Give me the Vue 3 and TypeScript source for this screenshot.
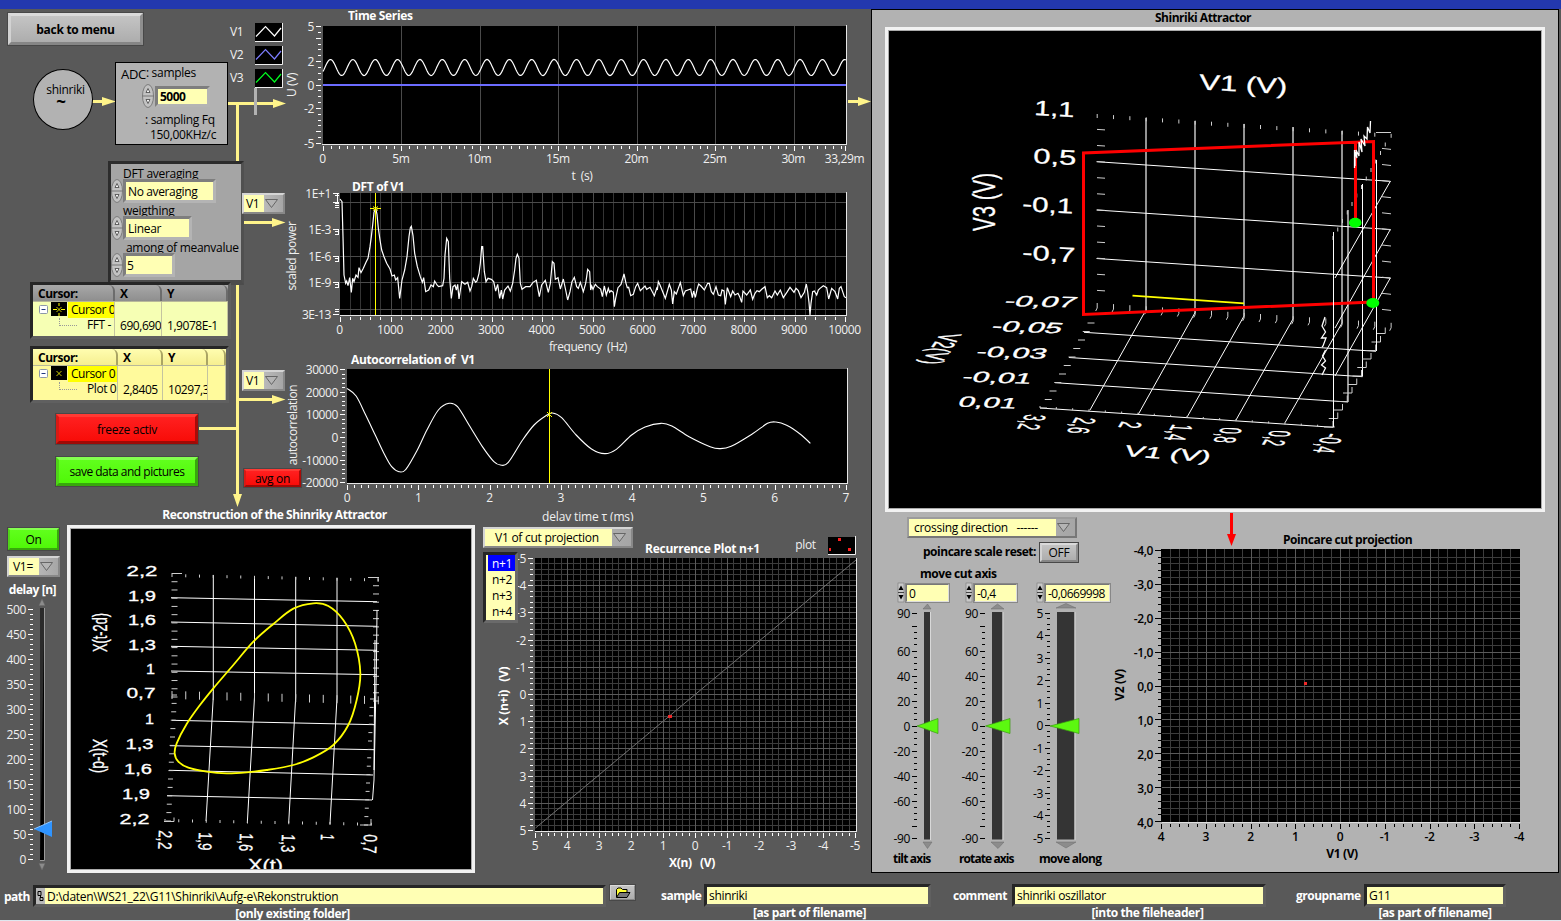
<script setup lang="ts">
interface Label { x: number; y: number; t: string; a?: string }
interface Label3d { t: string; w: number; s: number; m: string }
interface Slider {
  name: string; value: string; box: string; vb: string; w: number; labels: Label[]; ticks: string
  track: [number, number]; thumb: string; up: string; down: string
}

const r2 = (n: number) => Math.round(n * 100) / 100
const range = (a: number, b: number, n: number) =>
  Array.from({ length: n + 1 }, (_, i) => a + ((b - a) * i) / n)
const vlines = (xs: number[], y1: number, y2: number) => xs.map(x => `M${r2(x)} ${y1}V${y2}`).join('')
const hlines = (ys: number[], x1: number, x2: number) => ys.map(y => `M${x1} ${r2(y)}H${x2}`).join('')

/* points are stored in thirds of a pixel relative to an origin */
const decode = (src: string, ox: number, oy: number, sx = 3, sy = 3): [number, number][] =>
  src.trim().split(/\s+/).map(p => {
    const [x, y] = p.split(',').map(Number)
    return [r2(ox + x / sx), r2(oy + y / sy)] as [number, number]
  })
const poly = (pts: [number, number][]) => pts.map(p => p.join(',')).join(' ')
function smooth(pts: [number, number][], closed: boolean): string {
  const n = pts.length
  const at = (i: number) => (closed ? pts[(i + n) % n] : pts[Math.max(0, Math.min(n - 1, i))])
  let d = `M${pts[0].join(' ')}`
  for (let i = 0; i < (closed ? n : n - 1); i++) {
    const [p0, p1, p2, p3] = [at(i - 1), at(i), at(i + 1), at(i + 2)]
    d += `C${r2(p1[0] + (p2[0] - p0[0]) / 6)} ${r2(p1[1] + (p2[1] - p0[1]) / 6)} ${r2(p2[0] - (p3[0] - p1[0]) / 6)} ${r2(p2[1] - (p3[1] - p1[1]) / 6)} ${p2[0]} ${p2[1]}`
  }
  return d
}

/* ---- time series ---- */
const tx = (ms: number) => 323.5 + ms * 15.69
const ty = (v: number) => 85 - v * 11.7
const tsGrid = vlines([5, 10, 15, 20, 25, 30].map(tx), 26, 144)
const tsTicks = vlines(range(0, 33, 66).map(tx), 146, 149) +
  vlines([0, 5, 10, 15, 20, 25, 30, 33.29].map(tx), 146, 151) +
  hlines(range(-5, 5, 20).map(ty), 318, 321) + hlines([5, 4, 2, 0, -2, -4, -5].map(ty), 316, 321)
const tsWave = poly(Array.from({ length: 524 }, (_, i) =>
  [323 + i, r2(67.5 - 8 * Math.cos(((323 + i - 330.5) * 2 * Math.PI) / 22.36))] as [number, number]))
const tsLabels: Label[] = [
  ...[0, 5, 10, 15, 20, 25, 30].map(v => ({ x: tx(v) - 1, y: 163, t: v ? v + 'm' : '0' })),
  { x: 844.5, y: 163, t: '33,29m' },
  ...[5, 2, 0, -2, -5].map(v => ({ x: 314, y: ty(v) + 4.5, t: String(v), a: 'end' })),
]

/* ---- spectrum ---- */
const fx = (hz: number) => 340.5 + hz * 0.0505
const dftMinor = vlines(range(200, 9800, 48).map(fx), 193, 315)
const dftMajor = vlines(range(1000, 9000, 8).map(fx), 193, 315) + hlines([202.5, 229.5, 256.5, 282.5, 309.5], 340, 846)
const dftTicks = vlines(range(0, 10000, 50).map(fx), 317, 320) + vlines(range(0, 10000, 10).map(fx), 317, 322) +
  hlines([193.5, 202.5, 229.5, 256.5, 282.5, 314.5], 333, 339) +
  hlines([195.5, 203.5, 205.5, 207.5, 231.5, 234.5, 258.5, 261.5, 284.5, 287.5, 309.5, 311.5], 335, 339) +
  'M337.5 193V202M338.5 229V235M338.5 256V262M338.5 282V288'
const dftLabels: Label[] = [
  ...range(0, 10000, 10).map(v => ({ x: fx(v) - 1, y: 333.5, t: String(v) })),
  ...([['1E+1', 197.5], ['1E-3', 233.5], ['1E-6', 260.5], ['1E-9', 286.5], ['3E-13', 318.5]] as [string, number][])
    .map(([t, y]) => ({ x: 331, y, t, a: 'end' })),
]
const spectrum = poly([
  ...decode(`180,72 186,80 189,185 192,300 197,325 200,318 204,332 209,308 214,352 218,310 222,320 228,300 234,307 237,278
  243,293 250,280 258,262 264,250 270,215 274,185 278,150 282,112 287,100 291,118 295,160 300,195 305,225 312,245 320,265
  330,282 336,303 343,300 347,315 353,308 359,370 366,315 374,285 381,245 387,185 391,158 394,154 399,182 404,235 412,275
  421,305 427,322 431,308 437,350 446,345 453,330 460,335 464,318 471,330 476,335 488,332 492,310 495,240 500,190 505,200
  509,310 514,370 519,335 525,330 529,345 533,328 537,372 545,320 555,328 563,322 570,348 575,335 580,310 587,322 591,318
  597,295 601,265 605,215 608,215 613,290 618,320 624,310 634,313 641,320 647,348 653,328 659,370 664,345 668,372 674,345
  684,333 691,348 698,325 704,285 708,250 712,238 717,250 721,325 726,343 737,335 750,335 759,322 769,316 778,365 785,330
  796,316 805,352 811,325 817,260 822,265 826,313 834,308 841,342 850,312 857,345 863,375 870,350`, 280, 175),
  ...decode(`6,320 13,307 20,335 25,340 31,322 40,350 47,325 50,305 53,283 59,290 62,345 65,333 69,343 76,328 82,335
  92,342 97,365 103,333 109,360 115,340 119,352 123,347 130,352 133,395 137,370 144,338 153,328 162,297 168,325 172,338
  176,337 182,362 190,358 197,335 203,325 211,347 225,333 230,343 240,337 253,362 260,340 262,345 265,320 270,330 286,370
  298,328 304,345 308,387 313,350 319,357 331,323 340,362 346,348 362,342 367,368 371,348 376,367 382,340 386,327 393,333
  403,345 413,325 418,325 424,350 430,358 438,335 445,360 452,362 456,345 462,348 466,388 472,338 482,365 488,348 495,360
  504,355 509,365 515,382 519,348 530,360 541,345 548,373 555,355 561,347 568,350 576,342 585,335 592,368 598,362 605,368
  615,348 622,360 631,345 640,368 652,350 660,337 672,352 678,340 685,347 693,368 703,352 709,327 713,350 717,382 720,420
  723,385 728,350 733,348 740,360 745,345 750,340 760,332 770,338 776,372 785,340 795,350 803,372 808,340 813,335 818,350
  823,365 828,368`, 570, 175),
])

/* ---- autocorrelation ---- */
const ax = (v: number) => 347.5 + v * 71.25
const ay = (v: number) => 437.5 - v * 0.00226
const acTicks = vlines(range(0, 7, 70).map(ax), 485, 488) + vlines(range(0, 7, 7).map(ax), 485, 490) +
  hlines(range(-20000, 30000, 25).map(ay), 342, 345) + hlines(range(-20000, 30000, 5).map(ay), 340, 345)
const acLabels: Label[] = [
  ...range(0, 7, 7).map(v => ({ x: ax(v) - 0.5, y: 501.5, t: String(v) })),
  ...range(-20000, 30000, 5).map(v => ({ x: 338, y: ay(v) + 4.5, t: String(v), a: 'end' })),
]
const acCurve = smooth(decode(`201,115 225,138 250,195 275,255 300,315 318,350 337,365 355,358 385,300 410,240 440,180
  468,160 490,170 520,225 555,290 585,335 602,345 622,338 660,270 690,225 720,198 738,189 762,203 800,255 840,297
  875,311 905,298 945,255 980,231 1022,220 1050,228 1095,260 1150,290 1175,296 1205,289 1260,252 1300,220 1322,216
  1350,226 1385,252 1412,280`, 270, 350, 2.613, 3), false)

/* ---- reconstruction ---- */
const recGrid = [
  [213.3, 575, 213.3, 697], [213.3, 697, 206, 821], [254.5, 576, 254.5, 697], [254.5, 697, 247.3, 823],
  [295.7, 577, 295.7, 697], [295.7, 697, 288.7, 823], [337, 578, 337, 698], [337, 698, 330, 824],
  [171, 597.7, 377, 601.7], [171, 622, 377, 626.3], [171, 646.3, 377, 650.3], [171, 671, 377, 674.7],
  [172, 720.3, 375, 724.7], [170, 745.7, 374, 749.7], [169, 770.3, 373, 775], [167, 795.7, 372, 800],
]
const recTicks = range(573.5, 697, 15).map(y => `M171.5 ${r2(y)}h6M373 ${r2(y + 4)}h6`).join('') +
  range(0, 15, 15).map(i => `M${r2(172 - i * 0.4)} ${r2(695 + i * 8.4)}h5M${r2(374 - i * 0.4)} ${r2(699 + i * 8.4)}h-4`).join('') +
  range(0, 15, 15).map(i => `M${r2(172 + i * 13.75)} ${r2(574 + i * 0.3)}v3M${r2(172 + i * 13.75)} ${r2(691 + i * 0.35)}v8M${r2(165 + i * 13.75)} ${r2(819 + i * 0.25)}v3`).join('') +
  'M172 573.5h10M368 577.5h10v4M164 821.5h10v-4M360 825h11v-6'
const recLoop = smooth(decode(`940,310 985,318 1030,360 1065,430 1081,520 1070,600 1045,675 1000,735 940,772 880,795 800,810
  740,817 680,820 620,815 565,803 535,785 524,760 530,730 560,672 600,615 640,565 700,495 760,425 820,372 880,326`, 0, 500), true)
const recText: Label3d[] = [
  ...([['2,2', 126.5, 576, 31], ['1,9', 128, 600.5, 28], ['1,6', 128, 625, 28], ['1,3', 128, 649.5, 28], ['1', 146, 674, 9],
    ['0,7', 126.5, 698, 29], ['1', 145, 723.5, 9], ['1,3', 125.5, 749, 28], ['1,6', 124, 774, 28], ['1,9', 122, 799, 28],
    ['2,2', 119.500, 824, 30]] as [string, number, number, number][])
    .map(([t, x, y, w]) => ({ t, w, s: 14, m: `translate(${x} ${y})` })),
  ...([['2,2', 159, 830, 19], ['1,9', 199, 832, 18], ['1,6', 240, 833, 18], ['1,3', 282, 834, 18], ['1', 321, 834, 6],
    ['0,7', 364, 834, 19]] as [string, number, number, number][])
    .map(([t, x, y, w]) => ({ t, w, s: 19, m: `translate(${x} ${y}) rotate(93)` })),
  { t: 'X(t)', w: 35, s: 17, m: 'translate(248 870.5)' },
  { t: 'X(t-2d)', w: 39, s: 21, m: 'translate(107 652) rotate(-90)' },
  { t: 'X(t-d)', w: 34, s: 21, m: 'translate(93 739) rotate(90)' },
]

/* ---- recurrence plot ---- */
const rx = (v: number) => 695.5 - v * 32
const ry = (v: number) => 694.5 + v * 27.2
const rpMinor = vlines(range(-4.8, 4.8, 48).map(rx), 558, 831) + hlines(range(-4.8, 4.8, 48).map(ry), 535, 856)
const rpMajor = vlines(range(-4, 4, 8).map(rx), 558, 831) + hlines(range(-4, 4, 8).map(ry), 535, 856)
const rpTicks = vlines(range(-5, 5, 50).map(rx), 833, 836) + vlines(range(-5, 5, 10).map(rx), 833, 838) +
  hlines(range(-5, 5, 50).map(ry), 530, 533) + hlines(range(-5, 5, 10).map(ry), 528, 533)
const rpLabels: Label[] = range(-5, 5, 10).flatMap(v => [
  { x: rx(v) - 0.5, y: 850, t: String(v) }, { x: 526, y: ry(v) + 4.5, t: String(v), a: 'end' }])

/* ---- attractor ---- */
const atWall = [
  [1146, 118, 1146, 312], [1195, 121, 1195, 313], [1244, 124, 1244, 316], [1293, 127, 1293, 319], [1342, 131, 1342, 323],
  [1348, 210, 1348, 402],
]
const atLines = [
  [1096.5, 161.7, 1390.3, 181.3], [1096.5, 210, 1390.3, 229.5], [1096.5, 258.5, 1390.3, 278],
  [1084, 332.3, 1376, 351.3], [1069, 357.5, 1362.5, 376.7], [1055, 382.7, 1348, 402], [1040, 408, 1333.5, 427.3],
  [1144.5, 312.5, 1090, 410], [1195, 312.7, 1138.3, 414.3], [1244, 316, 1187.3, 416.7], [1293, 319, 1236, 420],
  [1342, 323, 1285, 422.7], [1362.5, 184, 1362.5, 376.5],
  [1390.3, 181.3, 1335, 278], [1390.3, 229.5, 1335, 328], [1390.3, 278, 1335, 376],
]
const atTicks = range(0, 18, 18).map(i => {
  const x = r2(1097.2 + i * 16.33); const y = 112 + i * 1.1
  return `M${x} ${r2(y + 2)}v4M${x} ${r2(y + 191)}v5l-1.5 3M${r2(1040 + i * 16.33)} ${r2(406 + i * 1.1)}v2`
}).join('') + range(1, 11, 10).map(i => {
  const y = r2(113.3 + i * 16.1)
  return `M1097 ${y}l8 .5M1382 ${r2(y + 19)}l9 1`
}).join('') + range(1, 12, 11).map(i => {
  const x = r2(1097 - i * 4.75); const y = r2(306 + i * 8.5)
  return `M${x} ${y}h7M${r2(x + 284)} ${r2(y + 19)}h9v-6M${r2(x + 293)} ${r2(y - 172)}v4`
}).join('') + 'M1376 132.500h15'
const atText: Label3d[] = [
  { t: 'V1 (V)', w: 88, s: 22, m: 'translate(1199 89.5) rotate(3)' },
  { t: '1,1', w: 40, s: 21, m: 'translate(1034 115) rotate(3)' },
  { t: '0,5', w: 43, s: 21, m: 'translate(1033 163) rotate(3)' },
  { t: '-0,1', w: 51, s: 21, m: 'translate(1022 211) rotate(3)' },
  { t: '-0,7', w: 53, s: 21, m: 'translate(1022 259.5) rotate(3)' },
  { t: '-0,07', w: 71, s: 15, m: 'translate(1003 306) rotate(1) skewX(-25)' },
  { t: '-0,05', w: 70, s: 15, m: 'translate(990 331) rotate(2) skewX(-25)' },
  { t: '-0,03', w: 70, s: 15, m: 'translate(975 356.5) rotate(2) skewX(-20)' },
  { t: '-0,01', w: 69, s: 15, m: 'translate(961 381.5) rotate(2) skewX(-20)' },
  { t: '0,01', w: 58, s: 15, m: 'translate(957 406.5) rotate(2) skewX(-20)' },
  { t: 'V3 (V)', w: 58, s: 31, m: 'translate(995 231) rotate(-90)' },
  { t: 'V2(V)', w: 46, s: 20, m: 'matrix(-.45 .66 -1.5 -.1 941 333)' },
  { t: 'V1 (V)', w: 86, s: 16, m: 'translate(1123 456) rotate(4) skewX(-15)' },
  ...([['3,2', 1026, 414, 23], ['2,6', 1076, 417, 24], ['2', 1122, 421, 10], ['1,4', 1173, 424, 24], ['0,8', 1222, 427, 23],
    ['0,2', 1271, 430, 23], ['-0,4', 1324, 433, 29]] as [string, number, number, number][])
    .map(([t, x, y, w]) => ({ t, w, s: 20, m: `matrix(-.4 .66 -1.5 -.1 ${x} ${y})` })),
]

/* ---- poincare ---- */
const px = (v: number) => 1340.5 - v * 44.75
const py = (v: number) => 686 + v * 33.9
const pcMinor = vlines(range(-3.8, 3.8, 38).map(px), 549, 822) + hlines(range(-3.8, 3.8, 38).map(py), 1162, 1520)
const pcMajor = hlines(range(-3, 3, 6).map(py), 1162, 1520) + vlines(range(-3, 3, 6).map(px), 549, 822)
const pcTicks = vlines(range(-4, 4, 40).map(px), 824, 827) + vlines(range(-4, 4, 8).map(px), 824, 829) +
  hlines(range(-4, 4, 40).map(py), 1158, 1161) + hlines(range(-4, 4, 8).map(py), 1155, 1161)
const pcLabels: Label[] = range(-4, 4, 8).flatMap(v => [
  { x: px(v) - 0.5, y: 841, t: String(v) }, { x: 1153, y: py(v) + 5, t: v.toFixed(1).replace('.', ','), a: 'end' }])

/* ---- sliders ---- */
const dy = (v: number) => 859.5 - v * 0.5
const delayTicks = hlines(range(0, 500, 50).map(dy), 30, 33) + hlines(range(0, 500, 10).map(dy), 28, 33)
const delayLabels: Label[] = range(0, 500, 10).map(v => ({ x: 26, y: dy(v) + 4.5, t: String(v), a: 'end' }))

const deg = (v: number) => 726 - v * 1.25
const degMarks = [90, 60, 40, 20, 0, -20, -40, -60, -90]
const degTicks = (x: number) => hlines(range(-80, 80, 32).map(deg), x + 2, x + 5) + hlines([...degMarks, 80, -80].map(deg), x, x + 5)
const degLabels = (x: number): Label[] => degMarks.map(v => ({ x, y: deg(v) + 4.5, t: String(v), a: 'end' }))
const cut = (v: number) => 725.5 - v * 22.5
const sliders: Slider[] = [
  { name: 'tilt axis', value: '0', box: 'w45', vb: '885 603 70 249', w: 70, labels: degLabels(910), ticks: degTicks(912),
    track: [924, 6], thumb: '917,726 938,718.5 938,733.5', up: '923,609 931,609 927.5,604', down: '923,842 932,842 927.5,848.5' },
  { name: 'rotate axis', value: '-0,4', box: 'w44', vb: '955 603 70 249', w: 70, labels: degLabels(978), ticks: degTicks(980),
    track: [992, 10.5], thumb: '985.5,726 1010,718.5 1010,733.5', up: '991,609 1004,609 997.5,604', down: '991,842 1004,842 998,848.5' },
  { name: 'move along', value: '-0,0669998', box: 'w66', vb: '1025 603 88 249', w: 88,
    labels: range(-5, 5, 10).map(v => ({ x: 1043, y: cut(v) + 4.5, t: String(v), a: 'end' })),
    ticks: hlines(range(-5, 5, 40).map(cut), 1047, 1050) + hlines(range(-5, 5, 10).map(cut), 1045, 1050),
    track: [1057, 17.5], thumb: '1050,726 1079,718.5 1079,733.5', up: '1056,608 1076,608 1066,603.5', down: '1056,842 1076,842 1066,848' },
]

const legend = [{ n: 'V1', c: '#ffffff' }, { n: 'V2', c: '#7d7dff' }, { n: 'V3', c: '#00ff20' }]
const averaging = [
  { label: 'DFT averaging', value: 'No averaging', cls: 'a1' },
  { label: 'weigthing', value: 'Linear', cls: 'a2' },
  { label: 'among of meanvalue', value: '5', cls: 'a3' },
]
const cursors = [
  { cls: 'fft', name: 'Cursor 0', plot: 'FFT -', x: '690,6900', y: '1,9078E-1' },
  { cls: 'acf', name: 'Cursor 0', plot: 'Plot 0', x: '2,8405', y: '10297,3' },
]
const offsets = ['n+1', 'n+2', 'n+3', 'n+4']
const fields = [
  { cls: 'f-sample', label: 'sample', value: 'shinriki', note: '[as part of filename]' },
  { cls: 'f-comment', label: 'comment', value: 'shinriki oszillator', note: '[into the fileheader]' },
  { cls: 'f-group', label: 'groupname', value: 'G11', note: '[as part of filename]' },
]
</script>

<template>
  <div class="screen">
    <div class="titlebar"></div>
    <main class="main">
      <section class="left">
        <div class="upper">
          <div class="controls">
            <button class="btn menu">back to menu</button>
            <div class="source-row">
              <div class="source"><span>shinriki</span><b>~</b></div>
              <div class="adc">
                <div class="adc-head"><span class="big">ADC</span><span>: samples</span></div>
                <div class="adc-value">
                  <svg class="knob" width="12" height="24" viewBox="0 0 12 24"><ellipse cx="6" cy="12" rx="5.500" ry="11.500" /><path d="M0 12H12" /><path class="tri" d="M4 8.500L6 4.500L8 8.500zM4 15.500L6 19.500L8 15.500z" /></svg>
                  <span class="sunk strong">5000</span>
                </div>
                <div class="adc-note">: sampling Fq</div>
                <div class="adc-freq">150,00KHz/c</div>
              </div>
            </div>
            <div class="dft-box">
              <div v-for="a in averaging" :key="a.label" class="dft-item" :class="a.cls">
                <div class="dft-label">{{ a.label }}</div>
                <div class="dft-row">
                  <svg class="knob" width="12" height="24" viewBox="0 0 12 24"><ellipse cx="6" cy="12" rx="5.500" ry="11.500" /><path d="M0 12H12" /><path class="tri" d="M4 8.500L6 4.500L8 8.500zM4 15.500L6 19.500L8 15.500z" /></svg>
                  <span class="sunk">{{ a.value }}</span>
                </div>
              </div>
            </div>
            <div v-for="c in cursors" :key="c.cls" class="cursor" :class="c.cls">
              <div class="c-head"><b>Cursor:</b><b>X</b><b>Y</b><b></b></div>
              <div class="c-body">
                <div class="c-col">
                  <div class="c-name">
                    <svg width="35" height="15" viewBox="0 0 35 15">
                      <rect x="6.500" y="3.500" width="8" height="8" rx="1" fill="#fff" stroke="#8c97a8" />
                      <path d="M8.500 7.500h4" stroke="#223a80" />
                      <rect x="18" y="0" width="16" height="14" fill="#000" />
                      <path v-if="c.cls === 'fft'" d="M20 7.500h4M28 7.500h4M26 1v3M26 11v3" stroke="#ff0" />
                      <path d="M23.500 5l5 5M28.500 5l-5 5" stroke="#ff0" stroke-width=".8" />
                    </svg>
                    <span>{{ c.name }}</span>
                  </div>
                  <div class="c-plot"><i></i><span>{{ c.plot }}</span></div>
                </div>
                <div class="c-col val">{{ c.x }}</div>
                <div class="c-col val">{{ c.y }}</div>
                <div class="c-col"></div>
              </div>
            </div>
            <button class="btn red freeze">freeze activ</button>
            <button class="btn green save">save data and pictures</button>
          </div>

          <div class="mid">
            <div class="legend">
              <div v-for="l in legend" :key="l.n" class="legend-row">
                <span>{{ l.n }}</span>
                <svg width="29" height="20" viewBox="0 0 29 20"><rect width="27" height="18" /><path d="M27.500 0V18.500H0" stroke="#eee" /><path d="M1 13.500L10.500 3.500L19.500 13L26 5" :stroke="l.c" stroke-width="1.200" /></svg>
              </div>
              <div class="legend-bar"></div>
            </div>
            <div class="select v1 one"><span>V1</span><svg width="13" height="9" viewBox="0 0 13 9"><path d="M.5 .5H12.500L6.500 8.500z" /></svg></div>
            <div class="select v1 two"><span>V1</span><svg width="13" height="9" viewBox="0 0 13 9"><path d="M.5 .5H12.500L6.500 8.500z" /></svg></div>
            <button class="btn red avg">avg on</button>
          </div>

          <div class="charts">
            <svg class="chart" width="585" height="174" viewBox="286 9 585 174">
              <text class="title" x="348" y="20">Time Series</text>
              <rect x="323" y="26" width="523" height="118" />
              <path class="grid-major" :d="tsGrid" />
              <polyline class="trace" :points="tsWave" />
              <path d="M323 85H846" stroke="#6c6cff" stroke-width="2" />
              <path class="frame-line" d="M322 144.500H846.500V25" />
              <path class="ticks" :d="tsTicks" />
              <text v-for="(l, i) in tsLabels" :key="i" class="lbl" :class="l.a" :x="l.x" :y="l.y">{{ l.t }}</text>
              <text class="lbl" x="582" y="180">t&#160; (s)</text>
              <text class="lbl" transform="translate(296 85) rotate(-90)">U (V)</text>
              <path class="wire" d="M848 101.500H860" /><path class="wire-head" d="M858 97L871 101.500L858 106z" />
            </svg>
            <svg class="chart" width="585" height="170" viewBox="286 183 585 170">
              <text class="title" x="352" y="191">DFT of V1</text>
              <rect x="340" y="193" width="506" height="122" />
              <path class="grid-minor" :d="dftMinor" /><path class="grid-major" :d="dftMajor" />
              <polyline class="trace" :points="spectrum" />
              <path class="cursor-line" d="M375.500 193V315M370 208.500h4M377 208.500h4M373 206.500l5 4M378 206.500l-5 4" />
              <path class="frame-line" d="M340 315.500H846.500V192" />
              <path class="ticks" :d="dftTicks" />
              <text v-for="(l, i) in dftLabels" :key="i" class="lbl" :class="l.a" :x="l.x" :y="l.y">{{ l.t }}</text>
              <text class="lbl" x="588" y="351">frequency&#160; (Hz)</text>
              <text class="lbl" transform="translate(296 256) rotate(-90)">scaled power</text>
            </svg>
            <svg class="chart" width="585" height="152" viewBox="286 353 585 152">
              <text class="title" x="351" y="364">Autocorrelation of&#160; V1</text>
              <rect x="347" y="369" width="500" height="114" />
              <path class="curve" :d="acCurve" />
              <path class="cursor-line" d="M549.500 369V483M547 412l5 5M552 412l-5 5" />
              <path class="frame-line" d="M347 483.500H847.500V368" />
              <path class="ticks" :d="acTicks" />
              <text v-for="(l, i) in acLabels" :key="i" class="lbl" :class="l.a" :x="l.x" :y="l.y">{{ l.t }}</text>
              <text class="lbl" transform="translate(296.500 425) rotate(-90)">autocorrelation</text>
            </svg>
          </div>
        </div>

        <div class="lower">
          <div class="delay">
            <button class="btn green on">On</button>
            <div class="select v1e"><span>V1=</span><svg width="13" height="9" viewBox="0 0 13 9"><path d="M.5 .5H12.500L6.500 8.500z" /></svg></div>
            <div class="delay-label">delay [n]</div>
            <svg class="chart" width="67" height="274" viewBox="0 597 67 274">
              <path class="ticks" :d="delayTicks" />
              <text v-for="(l, i) in delayLabels" :key="i" class="lbl end" :x="l.x" :y="l.y">{{ l.t }}</text>
              <rect x="40" y="608" width="4" height="252" class="groove" /><path d="M44.500 608V860.500H40" stroke="#999" />
              <path class="cap" d="M39 605.500L42 599L45 605.500zM39 863.500L42 870L45 863.500z" />
              <path d="M34 829L52 821V837z" fill="#2f94ff" /><path d="M34 829L52 821" stroke="#8cc4ff" />
            </svg>
          </div>
          <div class="recon">
            <h2>Reconstruction of the Shinriky Attractor</h2>
            <div class="frame">
              <svg width="400" height="340" viewBox="71 529 400 340">
                <rect x="71" y="529" width="400" height="340" />
                <path v-for="(g, i) in recGrid" :key="i" class="mesh" :d="`M${g[0]} ${g[1]}L${g[2]} ${g[3]}`" />
                <path class="mesh dim" :d="recTicks" />
                <path class="mesh" d="M377 610L376.500 660L374 780L372.500 800M375 640L374 770" stroke-width="1.500" />
                <path :d="recLoop" stroke="#ff0" stroke-width="1.800" fill="none" />
                <text v-for="(l, i) in recText" :key="i" class="t3" :transform="l.m" :font-size="l.s" :textLength="l.w" lengthAdjust="spacingAndGlyphs">{{ l.t }}</text>
              </svg>
            </div>
          </div>
          <div class="recur">
            <div class="delay-time">delay time τ (ms)</div>
            <div class="stack">
              <svg class="chart" width="396" height="353" viewBox="475 521 396 353">
                <text class="title wide" x="645" y="553">Recurrence Plot n+1</text>
                <text class="lbl" x="805.500" y="549">plot</text>
                <rect x="828" y="537" width="27" height="17" /><path d="M855.500 536V554.500H828" stroke="#eee" fill="none" />
                <path d="M838 538h3v3h-3zM829 548h2v3h-2zM848 548h3v3h-3z" fill="#ff2020" />
                <rect x="535" y="558" width="321" height="273" />
                <path class="grid-rp" :d="rpMinor" /><path class="grid-rpm" :d="rpMajor" />
                <path d="M535.500 828L856 560" stroke="#707070" fill="none" />
                <rect x="668" y="715" width="4" height="3" class="dot" />
                <path class="frame-line" d="M535 831.500H856.500V558" />
                <path class="ticks" :d="rpTicks" />
                <text v-for="(l, i) in rpLabels" :key="i" class="lbl" :class="l.a" :x="l.x" :y="l.y">{{ l.t }}</text>
                <text class="title mid-t" x="692" y="866.500">X(n)&#160;&#160; (V)</text>
                <text class="title mid-t" transform="translate(508 696) rotate(-90)">X (n+i)&#160;&#160; (V)</text>
              </svg>
              <div class="over">
                <div class="select cutsel"><span>V1 of cut projection</span><svg width="13" height="9" viewBox="0 0 13 9"><path d="M.5 .5H12.500L6.500 8.500z" /></svg></div>
                <ul class="list"><li v-for="(o, i) in offsets" :key="o" :class="{ sel: i === 0 }">{{ o }}</li></ul>
              </div>
            </div>
          </div>
        </div>

        <svg class="wires" width="290" height="500" viewBox="0 9 290 500">
          <path class="wire" d="M92 101.500H104M228 103.500H275M237.500 103V161M237.500 281V497M241 222.500H275M238 399.500H275M199 428.500H237" />
          <path class="wire-head" d="M102 97L116 101.500L102 106zM273 99L286 103.500L273 108zM272 218L285.500 222.500L272 227zM272 395L285.500 399.500L272 404zM233 494H242L237.500 507z" />
        </svg>
      </section>

      <section class="panel">
        <h2>Shinriki Attractor</h2>
        <div class="frame big-frame">
          <svg width="653" height="478" viewBox="889 31 653 478">
            <rect x="889" y="31" width="653" height="478" />
            <path v-for="(g, i) in atWall" :key="i" class="wall" :d="`M${g[0]} ${g[1]}L${g[2]} ${g[3]}`" />
            <path v-for="(g, i) in atLines" :key="'l' + i" class="mesh" :d="`M${g[0]} ${g[1]}L${g[2]} ${g[3]}`" />
            <path class="mesh dim" :d="atTicks" />
            <path d="M1132.500 295.700L1244 303.300" stroke="#ff0" stroke-width="1.700" />
            <path d="M1355.500 142V222M1373.500 303V141.500L1083.500 153V314.500L1373 302" stroke="#f00" stroke-width="3" fill="none" />
            <path class="mesh bold" d="M1370.500 121l-.5 12l-2.500 -6l-.5 12l-3 -3l1 10l-4 -7l1 13l-3 -10v14l-3 -6l1 8l-2 -6v14M1354.500 150v18M1325 317l-3 9l3.500 6l-4 6l4.500 0l-3 8l-1 1M1325.500 350l-3 6l3 5l-4 4l4 3l-3.500 7" />
            <path class="mesh" d="M1376.500 160V351M1333.500 232V427" />
            <ellipse cx="1355.200" cy="222.700" rx="6.300" ry="5" fill="#0f0" /><ellipse cx="1372.800" cy="303" rx="6.500" ry="5" fill="#0f0" />
            <text v-for="(l, i) in atText" :key="'t' + i" class="t3" :transform="l.m" :font-size="l.s" :textLength="l.w" lengthAdjust="spacingAndGlyphs">{{ l.t }}</text>
          </svg>
        </div>
        <div class="panel-lower">
          <div class="cut">
            <div class="select cross"><span>crossing direction&#160;&#160; ------</span><svg width="13" height="9" viewBox="0 0 13 9"><path d="M.5 .5H12.500L6.500 8.500z" /></svg></div>
            <div class="reset"><b>poincare scale reset:</b><button class="btn off">OFF</button></div>
            <div class="cut-title">move cut axis</div>
            <div class="sliders">
              <div v-for="s in sliders" :key="s.name" class="slider" :class="s.box">
                <div class="num">
                  <svg width="6" height="19" viewBox="0 0 6 19"><rect width="6" height="19" fill="#c8c8c8" stroke="#777" stroke-width=".6" /><path d="M.5 7L3 2.500L5.500 7zM.5 12L3 16.500L5.500 12z" fill="#000" /><path d="M0 9.500H6" stroke="#444" /></svg>
                  <span>{{ s.value }}</span>
                </div>
                <svg class="chart dark" :width="s.w" height="249" :viewBox="s.vb">
                  <path class="ticks" :d="s.ticks" />
                  <text v-for="(l, i) in s.labels" :key="i" class="lbl end" :x="l.x" :y="l.y">{{ l.t }}</text>
                  <rect class="slot" :x="s.track[0]" y="612" :width="s.track[1]" height="227.500" />
                  <path :d="`M${s.track[0] + s.track[1] + 0.5} 612V840`" stroke="#d8d8d8" />
                  <polygon class="cap" :points="s.up" /><polygon class="cap" :points="s.down" />
                  <polygon class="thumb" :points="s.thumb" />
                </svg>
                <div class="s-name">{{ s.name }}</div>
              </div>
            </div>
          </div>
          <svg class="chart dark" width="446" height="360" viewBox="1112 512 446 360">
            <path d="M1231.500 513V535" stroke="#f00" stroke-width="3" /><path d="M1227 534H1236L1231.500 546z" fill="#f00" />
            <text class="title tight" x="1283" y="544">Poincare cut projection</text>
            <rect x="1161" y="549" width="359" height="273" />
            <path class="grid-rp" :d="pcMinor" /><path class="grid-rpm" :d="pcMajor" />
            <path d="M1162 822.500H1520.500" stroke="#ddd" />
            <rect x="1304" y="682" width="3" height="3" class="dot" />
            <path class="ticks" :d="pcTicks" />
            <text v-for="(l, i) in pcLabels" :key="i" class="lbl semi" :class="l.a" :x="l.x" :y="l.y">{{ l.t }}</text>
            <text class="title mid-t" x="1342" y="857.500">V1 (V)</text>
            <text class="title mid-t" transform="translate(1124 685) rotate(-90)">V2 (V)</text>
          </svg>
        </div>
      </section>
    </main>

    <footer class="footer">
      <div class="field f-path">
        <b>path</b>
        <div class="f-col">
          <div class="inset path-inset"><svg width="9" height="18" viewBox="0 0 9 18"><rect width="9" height="18" fill="#b8b8b8" /><path d="M2 4.500h3v4h-3zM4 10.500h3v3h-3zM4.500 8v3" fill="none" stroke="#000" /></svg><span>D:\daten\WS21_22\G11\Shinriki\Aufg-e\Rekonstruktion</span></div>
          <div class="note">[only existing folder]</div>
        </div>
      </div>
      <button class="btn browse"><svg width="16" height="12" viewBox="0 0 16 12"><path d="M1.500 10V2.500L3 1h3l1.500 1.500H12V5" fill="#ff3" stroke="#000" /><path d="M1.500 10.500L4.500 5.500H15L12 10.500z" fill="#777" stroke="#000" /></svg></button>
      <div v-for="f in fields" :key="f.cls" class="field" :class="f.cls">
        <b>{{ f.label }}</b>
        <div class="f-col"><div class="inset"><span>{{ f.value }}</span></div><div class="note">{{ f.note }}</div></div>
      </div>
    </footer>
  </div>
</template>

<style>
html, body { background: #595959; overflow: hidden; }
</style>

<style scoped>
.screen { width: 1561px; height: 921px; display: flex; flex-direction: column; overflow: hidden; background: #595959; color: #000; font: 12px/14px "Open Sans", "Noto Sans", sans-serif; letter-spacing: -.3px; box-sizing: border-box; border-bottom: 1px solid #dfe6ee; }
.screen *, .screen *::before { box-sizing: border-box; }
svg { display: block; flex: none; overflow: visible; }
h2 { margin: 0; font-size: 12px; font-weight: 700; letter-spacing: -.38px; }
span, b { white-space: nowrap; }
.titlebar { height: 9px; background: #2338ae; flex: none; }
.main { height: 865px; display: flex; flex: none; }
.left { width: 871px; position: relative; flex: none; }
.upper { height: 496px; display: flex; }
.controls { width: 230px; flex: none; position: relative; z-index: 1; }
.mid { width: 56px; flex: none; position: relative; z-index: 2; padding-left: 12px; }
.charts { width: 585px; flex: none; }
.wires { position: absolute; left: 0; top: 0; z-index: 0; }
.wire { stroke: #fff48a; stroke-width: 3; fill: none; }
.wire-head { fill: #fff48a; }

.btn { display: flex; align-items: center; justify-content: center; padding: 1px 0 0; margin: 0; font: inherit; letter-spacing: inherit; color: #000; border: 3px solid; border-color: #dadada #8e8e8e #868686 #d2d2d2; background: linear-gradient(#c4c4c4, #adadad); outline: 1px solid #484848; outline-offset: -1px; border-radius: 0; white-space: nowrap; }
.btn.red { background: linear-gradient(#ff2020, #f80c08); border-color: #ff3a34 #a80c08 #a00a06 #d81a14; }
.btn.green { background: linear-gradient(#60ff1c, #50f808); border-color: #84ff50 #38a80c #38a80c #50d418; }
.menu { width: 137px; height: 34px; margin: 3px 0 0 7px; border-width: 4px; font-weight: 700; }
.source-row { display: flex; height: 83px; margin-top: 16px; }
.source { width: 60px; height: 61px; margin: 7px 0 0 33px; border: 1px solid #000; border-radius: 50%; background: #b2b2b2; display: flex; flex-direction: column; align-items: center; padding: 12px 0 0 5px; line-height: 16px; }
.source b { font-size: 17px; line-height: 12px; margin: -2px 9px 0 0; height: 12px; }
.adc { width: 113px; height: 83px; margin-left: 22px; border: 1px solid #000; background: #b2b2b2; padding: 3px 0 0 5px; }
.adc-head { display: flex; height: 17px; }
.adc-head .big { font-size: 13px; line-height: 17px; }
.adc-value { display: flex; align-items: center; margin: 1px 0 0 21px; height: 24px; }
.adc-note { margin: 5px 0 0 24px; }
.adc-freq { margin: 1px 0 0 29px; }
.knob ellipse { fill: #c2c2c2; stroke: #7c7c7c; }
.knob path { stroke: #777; fill: none; }
.knob .tri { stroke: #444; fill: #f4f4f4; stroke-width: .8; }
.sunk { display: inline-block; height: 21px; line-height: 16px; border: 3px solid; border-color: #7e7e7e #b4b4b4 #b4b4b4 #7e7e7e; background: #ffffb4; padding-left: 3px; }
.adc .sunk { width: 55px; margin-left: 1px; padding-left: 2px; letter-spacing: -.5px; }
.strong { font-weight: 700; }
.dft-box { width: 136px; height: 124px; margin: 16px 0 0 108px; border: 3px solid; border-color: #2c2c2c #505050 #4c4c4c #2c2c2c; border-right-width: 3px; border-bottom-width: 5px; background: #a5a5a5; padding: 3px 0 0; }
.dft-item { height: 37px; }
.dft-label { padding-left: 12px; height: 14px; white-space: nowrap; }
.a3 .dft-label { padding-left: 15px; }
.dft-row { display: flex; align-items: center; height: 24px; margin-top: -2px; }
.dft-row .sunk { height: 24px; line-height: 20px; padding-left: 2px; }
.a1 .sunk { width: 93px; letter-spacing: -.37px; } .a2 .sunk { width: 69px; } .a3 .sunk { width: 52px; padding-left: 1px; }

.cursor { width: 201px; margin-left: 30px; border: 3px solid; border-color: #262626 #606060 #606060 #262626; position: relative; }
.cursor.fft { height: 57px; margin-top: -3px; }
.cursor.acf { height: 57px; margin-top: 7px; width: 199px; }
.c-head, .c-body { display: grid; grid-template-columns: 82px 47px 1fr 0; overflow: hidden; }
.acf .c-head, .acf .c-body { grid-template-columns: 85px 45px 45px 1fr; }
.c-head { height: 17px; background: linear-gradient(#a8a8a8, #8e8e8e); border-bottom: 1px solid #b8b89a; }
.acf .c-head { background: linear-gradient(#fffdb0, #f6ef90); }
.c-head b { padding-left: 5px; line-height: 17px; letter-spacing: -.5px; border-right: 2px solid #6c6c6c; border-radius: 0 6px 0 0; }
.acf .c-head b { border-right-color: #aaa464; }
.c-body { height: 34px; background: #f6ffb4; }
.acf .c-body { background: #fffa9c; }
.c-col { overflow: hidden; border-right: 1px solid #c4c4a0; }
.c-col.val { padding: 17px 0 0 5px; line-height: 14px; white-space: nowrap; letter-spacing: -.45px; }
.c-name { display: flex; height: 16px; }
.c-name span { background: #ff0; padding-left: 3px; width: 60px; line-height: 15px; letter-spacing: -.45px; }
.c-plot { display: flex; padding-left: 26px; letter-spacing: -.4px; }
.c-plot i { width: 18px; height: 8px; border-left: 1px dotted #999; border-bottom: 1px dotted #999; margin-right: 10px; flex: none; }
.freeze { width: 144px; height: 32px; margin: 10px 0 0 55px; border-width: 4px; }
.save { width: 144px; height: 31px; margin: 11px 0 0 55px; border-width: 4px; letter-spacing: -.5px; }

.legend { height: 93px; margin: 14px 0 0 -12px; width: 56px; }
.legend-row { display: flex; height: 23px; color: #f2f2f2; }
.legend-row span { width: 25px; line-height: 18px; }
.legend svg path { fill: none; }
.legend-bar { width: 3px; height: 27px; background: #b2b2b2; margin: -4px 0 0 24px; }
.select { display: flex; align-items: stretch; justify-content: space-between; background: linear-gradient(90deg, #cecece, #a6a6a6); border: 2px solid; border-color: #d4d4d4 #888 #888 #d4d4d4; }
.select span { background: #ffffb4; padding-left: 4px; display: flex; align-items: center; }
.select svg { margin: 4px 5px 0 0; }
.select svg path { fill: #b4b4b4; stroke: #666; }
.v1 { width: 43px; height: 21px; }
.v1 span { width: 20px; padding-left: 2px; }
.v1.one { margin-top: 77px; } .v1.two { margin-top: 156px; }
.avg { width: 59px; height: 20px; margin: 77px 0 0 1px; }

.chart .title { font-weight: 700; fill: #fff; font-size: 12px; letter-spacing: -.35px; }
.chart .title.wide { letter-spacing: -.26px; }
.chart .title.tight { letter-spacing: -.45px; }
.mid-t { text-anchor: middle; }
.lbl { fill: #f0f0f0; font-size: 12px; text-anchor: middle; letter-spacing: -.4px; }
.lbl.end { text-anchor: end; }
.ticks { stroke: #fff; fill: none; shape-rendering: crispEdges; }
.grid-major { stroke: #4a4a4a; fill: none; shape-rendering: crispEdges; }
.grid-minor { stroke: #343434; fill: none; shape-rendering: crispEdges; }
.grid-rp { stroke: #3c3c3c; fill: none; shape-rendering: crispEdges; }
.grid-rpm { stroke: #5a5a5a; fill: none; shape-rendering: crispEdges; }
.frame-line { stroke: #e6e6e6; fill: none; shape-rendering: crispEdges; }
.trace { stroke: #fff; fill: none; stroke-width: 1.200; }
.curve { stroke: #fff; fill: none; stroke-width: 1.100; }
.cursor-line { stroke: #ff0; fill: none; }
.dot { fill: #f02828; }
.dark .title, .dark .lbl { fill: #000; }
.dark .ticks { stroke: #000; }
.semi { font-weight: 600; }

.lower { height: 369px; display: flex; }
.delay { width: 67px; flex: none; }
.on { width: 53px; height: 24px; margin: 22px 0 0 7px; }
.v1e { width: 53px; height: 21px; margin: 5px 0 0 7px; }
.v1e span { width: 30px; }
.delay-label { height: 20px; line-height: 25px; color: #fff; font-weight: 700; text-align: center; letter-spacing: -.45px; padding-right: 2px; }
.groove { fill: #2b2b2b; }
.cap { fill: #8c8c8c; stroke: #6a6a6a; stroke-width: .5; }
.recon { width: 408px; flex: none; }
.recon h2 { height: 20px; line-height: 20px; color: #fff; text-align: center; padding-left: 7px; letter-spacing: -.42px; }
.frame { width: 408px; height: 348px; border: 4px solid #f2f2f2; border-right-color: #f2f2f2; outline: 1px solid #aaa; outline-offset: -4px; }
.frame svg { overflow: hidden; }
.mesh { stroke: #fff; fill: none; stroke-width: 1; }
.mesh.dim { stroke: #cfcfcf; }
.mesh.bold { stroke-width: 1.300; }
.wall { stroke: #a4a4a4; stroke-width: 1.800; fill: none; }
.t3 { fill: #fff; stroke: #fff; stroke-width: .3; font-family: "Liberation Sans", Arial, sans-serif; letter-spacing: 0; }
.recur { width: 396px; flex: none; }
.delay-time { height: 16px; overflow: hidden; color: #f0f0f0; padding: 5px 0 0 67px; white-space: nowrap; letter-spacing: -.15px; }
.stack { display: grid; }
.stack > * { grid-area: 1 / 1; }
.over { padding: 6px 0 0 8px; }
.cutsel { width: 150px; height: 21px; }
.cutsel span { width: 127px; padding-left: 10px; letter-spacing: -.25px; }
.list { list-style: none; margin: 4px 0 0; padding: 0; width: 35px; height: 71px; border: 3px solid; border-color: #262626 #6a6a6a #6a6a6a #262626; background: #ffffb4; }
.list li { height: 16px; line-height: 17px; margin-left: 2px; padding-left: 4px; }
.list .sel { background: #00f; color: #fff; }

.panel { width: 688px; height: 864px; background: #b2b2b2; border: solid #000; border-width: 1px 1px 1px 1px; flex: none; }
.panel h2 { height: 17px; line-height: 16px; text-align: center; padding-right: 24px; letter-spacing: -.5px; }
.big-frame { width: 660px; height: 485px; margin-left: 13px; border-width: 4px 3px 3px 4px; }
.panel-lower { display: flex; height: 360px; }
.cut { width: 240px; flex: none; }
.cross { width: 170px; height: 21px; margin: 5px 0 0 35px; border-color: #9c9c9c #777 #777 #9c9c9c; }
.cross span { width: 147px; padding-left: 5px; letter-spacing: -.28px; padding-top: 1px; }
.reset { display: flex; align-items: center; margin: 4px 0 0 51px; height: 20px; }
.reset b { width: 113px; letter-spacing: -.48px; }
.off { width: 40px; height: 21px; margin-left: 3px; }
.cut-title { font-weight: 700; margin: 4px 0 0 48px; height: 17px; line-height: 16px; letter-spacing: -.45px; }
.sliders { display: flex; padding-left: 13px; }
.slider { width: 70px; flex: none; }
.slider.w66 { width: 88px; }
.num { display: flex; height: 20px; margin-left: 13px; }
.w44 .num { margin-left: 11px; } .w66 .num { margin-left: 12px; }
.num span { border: 2px solid; border-color: #777 #ddd #ddd #777; outline: 1px solid #888; outline-offset: -1px; background: #ffffb4; height: 20px; line-height: 17px; width: 45px; margin-left: 1px; padding-left: 2px; letter-spacing: -.5px; }
.w66 .num span { width: 67px; }
.slot { fill: #343434; }
.thumb { fill: #5cf810; stroke: #3a9a10; stroke-width: .7; }
.s-name { font-weight: 700; padding-left: 8px; white-space: nowrap; letter-spacing: -.8px; }
.w44 .s-name { padding-left: 4px; letter-spacing: -.9px; } .w66 .s-name { padding-left: 14px; letter-spacing: -.7px; }

.footer { height: 46px; display: flex; color: #fff; position: relative; }
.field { display: flex; flex: none; }
.field b { padding-top: 15px; letter-spacing: -.5px; }
.inset { height: 23px; margin-top: 10px; border: 3px solid; border-color: #262626 #606060 #606060 #262626; background: #ffffb4; color: #000; display: flex; align-items: center; padding-left: 2px; padding-top: 1px; }
.path-inset { padding: 0; margin-top: 11px; height: 22px; overflow: hidden; }
.path-inset span { padding: 2px 0 0 2px; letter-spacing: -.3px; }
.note { text-align: center; font-weight: 700; height: 12px; line-height: 12px; letter-spacing: -.38px; }
.f-path { margin-left: 4px; } .f-path b { width: 29px; padding-top: 16px; } .f-path .f-col { width: 573px; }
.f-path .note { padding-right: 54px; margin-top: 1px; }
.browse { width: 27px; height: 17px; margin: 10px 0 0 3px; border-width: 2px; padding: 0; }
.f-sample { margin-left: 25px; } .f-sample b { width: 43px; } .f-sample .f-col { width: 227px; }
.f-sample .note { padding-right: 16px; }
.f-comment { margin-left: 22px; } .f-comment b { width: 59px; } .f-comment .f-col { width: 254px; }
.f-comment .note { padding-left: 17px; }
.f-group { margin-left: 30px; } .f-group b { width: 68px; } .f-group .f-col { width: 142px; }
.f-group .note { padding-left: 0; }
</style>
